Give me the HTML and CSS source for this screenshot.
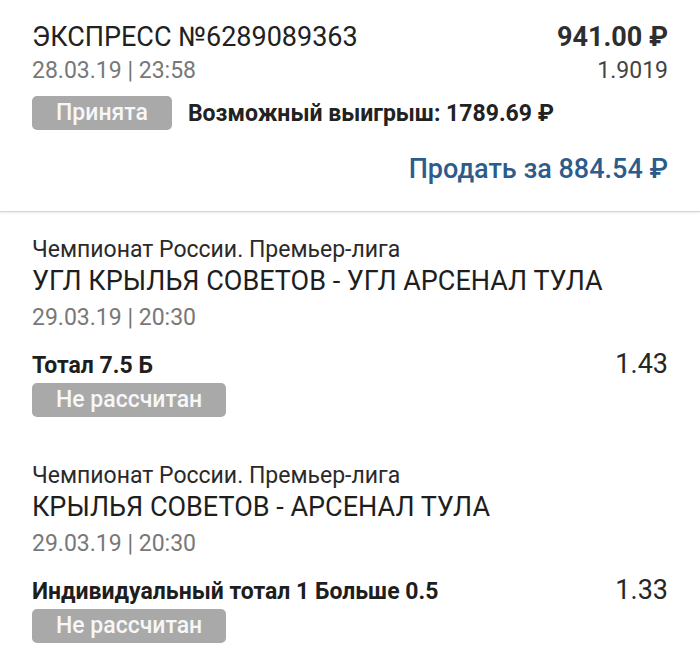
FILE: index.html
```html
<!DOCTYPE html>
<html lang="ru">
<head>
<meta charset="utf-8">
<link rel="stylesheet" href="styles.css">
</head>
<body>
<div class="page">
  <section class="header">
    <div class="row">
      <div class="title">ЭКСПРЕСС №6289089363</div>
      <div class="amount">941.00 ₽</div>
    </div>
    <div class="row">
      <div class="date">28.03.19 | 23:58</div>
      <div class="coef">1.9019</div>
    </div>
    <div class="row row-status">
      <span class="badge badge-accepted">Принята</span>
      <span class="win">Возможный выигрыш: 1789.69 ₽</span>
    </div>
    <div class="sell-row">
      <span class="sell">Продать за 884.54 ₽</span>
    </div>
  </section>
  <div class="divider"></div>
  <section class="event">
    <div class="league">Чемпионат России. Премьер-лига</div>
    <div class="match">УГЛ КРЫЛЬЯ СОВЕТОВ - УГЛ АРСЕНАЛ ТУЛА</div>
    <div class="date">29.03.19 | 20:30</div>
    <div class="row bet-row">
      <div class="bet">Тотал 7.5 Б</div>
      <div class="odds">1.43</div>
    </div>
    <span class="badge">Не рассчитан</span>
  </section>
  <section class="event">
    <div class="league">Чемпионат России. Премьер-лига</div>
    <div class="match">КРЫЛЬЯ СОВЕТОВ - АРСЕНАЛ ТУЛА</div>
    <div class="date">29.03.19 | 20:30</div>
    <div class="row bet-row">
      <div class="bet">Индивидуальный тотал 1 Больше 0.5</div>
      <div class="odds">1.33</div>
    </div>
    <span class="badge">Не рассчитан</span>
  </section>
</div>
</body>
</html>
```

FILE: styles.css
```css
html, body {
  margin: 0;
  padding: 0;
  background: #ffffff;
}
body {
  font-family: Roboto, "Liberation Sans", sans-serif;
  color: #212121;
}
.page {
  width: 700px;
  overflow: hidden;
}
.header {
  padding: 21px 32px 26px 32px;
}
.row {
  display: flex;
  justify-content: space-between;
  align-items: baseline;
}
.title {
  font-size: 27px;
  line-height: 32px;
  color: #212121;
}
.amount {
  font-size: 27px;
  line-height: 32px;
  font-weight: 700;
  color: #2e2e2e;
}
.date {
  font-size: 23px;
  line-height: 26px;
  margin-top: 5px;
  color: #787878;
}
.coef {
  font-size: 23px;
  line-height: 26px;
  margin-top: 5px;
  color: #444444;
}
.row-status {
  justify-content: flex-start;
  align-items: center;
  margin-top: 12px;
  gap: 16px;
}
.badge {
  display: inline-block;
  background: #a9a9a9;
  color: #f7f7f7;
  border-radius: 5px;
  font-size: 23px;
  font-weight: 500;
  line-height: 34px;
  height: 34px;
  padding: 0 24px;
}
.win {
  font-size: 23px;
  font-weight: 700;
  color: #222222;
}
.sell-row {
  display: flex;
  justify-content: flex-end;
  margin-top: 23px;
}
.sell {
  font-size: 27px;
  line-height: 32px;
  font-weight: 500;
  color: #2c5c8c;
}
.divider {
  height: 1px;
  background: #d6d6d6;
  box-shadow: 0 1px 2px rgba(0, 0, 0, 0.12);
}
.event {
  padding: 24px 32px 21px 32px;
}
.league {
  font-size: 23px;
  line-height: 28px;
  color: #2a2a2a;
}
.match {
  font-size: 27px;
  line-height: 32px;
  margin-top: 1px;
  color: #1e1e1e;
}
.event .date {
  margin-top: 8px;
}
.bet-row {
  margin-top: 17px;
}
.bet {
  font-size: 23px;
  line-height: 28px;
  font-weight: 700;
  color: #1e1e1e;
}
.odds {
  font-size: 27px;
  line-height: 32px;
  color: #262626;
}
.event .badge {
  margin-top: 3px;
}
```
